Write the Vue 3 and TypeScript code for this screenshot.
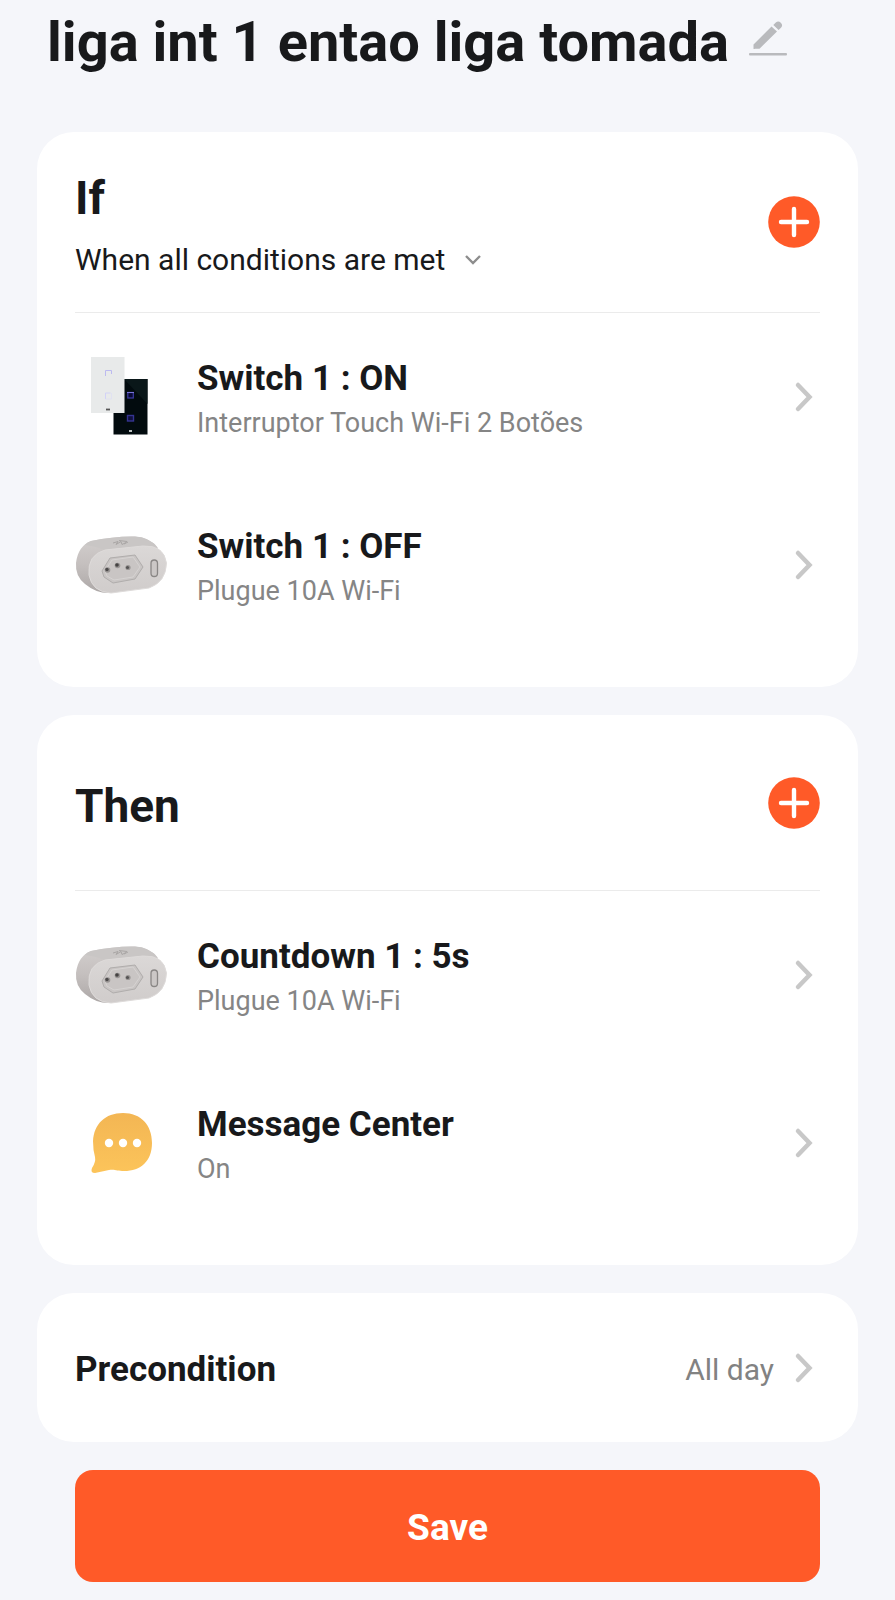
<script setup lang="ts">
import { ref } from 'vue'

type IconName = 'wall-switch' | 'plug' | 'message'

interface Entry {
  id: number
  icon: IconName
  title: string
  detail: string
}

const name = ref('liga int 1 entao liga tomada')
const matchMode = ref('all')

const conditions: Entry[] = [
  { id: 1, icon: 'wall-switch', title: 'Switch 1 : ON', detail: 'Interruptor Touch Wi-Fi 2 Botões' },
  { id: 2, icon: 'plug', title: 'Switch 1 : OFF', detail: 'Plugue 10A Wi-Fi' },
]

const actions: Entry[] = [
  { id: 3, icon: 'plug', title: 'Countdown 1 : 5s', detail: 'Plugue 10A Wi-Fi' },
  { id: 4, icon: 'message', title: 'Message Center', detail: 'On' },
]

const sections = [
  { key: 'if', heading: 'If', entries: conditions },
  { key: 'then', heading: 'Then', entries: actions },
]
</script>

<template>
  <main class="page">
    <header class="title-bar">
      <h1 class="title">{{ name }}</h1>
      <button class="edit" type="button" aria-label="Edit name">
        <svg width="38" height="38" viewBox="0 0 38 38" aria-hidden="true">
          <path d="M4.500 28.500V24.500L22.500 6.500l5.500 5L10.500 28.700H6Q4.500 29.500 4.500 28.500Z" fill="#b9babd" />
          <path d="M24.300 5l2.500-2.500q2.500-2.300 5 .2 2.500 2.300.2 5l-2.400 2.300Z" fill="#b9babd" />
          <rect x="0" y="33" width="38" height="2.500" rx="1" fill="#b9babd" />
        </svg>
      </button>
    </header>

    <section v-for="section in sections" :key="section.key" class="card">
      <div class="card-head" :class="section.key">
        <div class="card-label">
          <h2 class="heading">{{ section.heading }}</h2>
          <div v-if="section.key === 'if'" class="mode">
            <select v-model="matchMode" class="mode-select" aria-label="Condition matching">
              <option value="all">When all conditions are met</option>
              <option value="any">When any condition is met</option>
            </select>
            <svg width="18" height="12" viewBox="0 0 18 12" aria-hidden="true">
              <path d="M2 2l7 7 7-7" fill="none" stroke="#8d8d8d" stroke-width="2.400" />
            </svg>
          </div>
        </div>
        <button class="add" type="button" :aria-label="`Add to ${section.heading}`">
          <svg width="52" height="52" viewBox="0 0 52 52" aria-hidden="true">
            <circle cx="26" cy="26" r="25.800" fill="#ff5a28" />
            <path d="M26 13v26M13 26h26" stroke="#fff" stroke-width="4.400" stroke-linecap="round" />
          </svg>
        </button>
      </div>

      <ul class="entries">
        <li v-for="entry in section.entries" :key="entry.id">
          <button class="entry" type="button">
            <svg v-if="entry.icon === 'wall-switch'" class="icon" viewBox="0 0 92 92" aria-hidden="true">
              <rect x="38.500" y="28" width="34" height="55.500" fill="#020b0e" />
              <path d="M49 28h23.500v25Z" fill="#0a1719" />
              <rect x="16" y="6" width="33.500" height="56" fill="#e8eaea" />
              <path d="M30.500 25v-5.500h6V23" fill="none" stroke="#bcbaf0" />
              <path d="M30.500 48v-6h5" fill="none" stroke="#d2d2f7" />
              <path d="M36.500 42v6h-6" fill="none" stroke="#dedff2" stroke-width=".8" />
              <path d="M31 58.500h4" stroke="#555" stroke-width="1.800" />
              <rect x="52.800" y="41.500" width="5.500" height="5.500" fill="#080832" stroke="#3d3ba4" stroke-width="1.200" />
              <path d="M52 41.500h7" stroke="#7774d7" />
              <rect x="52.500" y="64.500" width="6" height="5.500" fill="#11113e" stroke="#353491" stroke-width="1.400" />
              <path d="M54 80h3" stroke="#e9eeee" stroke-width="1.600" />
            </svg>

            <svg v-else-if="entry.icon === 'plug'" class="icon" viewBox="0 0 92 92" aria-hidden="true">
              <defs>
                <linearGradient :id="`side-${entry.id}`" x1="0" y1="0" x2="0" y2="1">
                  <stop offset="0" stop-color="#d3cfce" />
                  <stop offset=".5" stop-color="#c4bfbe" />
                  <stop offset="1" stop-color="#aca7a6" />
                </linearGradient>
                <linearGradient :id="`face-${entry.id}`" x1="0" y1="0" x2="0" y2="1">
                  <stop offset="0" stop-color="#dbd8d7" />
                  <stop offset="1" stop-color="#d0cccb" />
                </linearGradient>
              </defs>
              <path d="M16 22Q40 17 60 17.500Q76 19 83 29L60 66L36 74Q22 75 10 65Q0 57 1 44Q3 27 16 22Z" :fill="`url(#side-${entry.id})`" />
              <path d="M16 22Q40 17 60 17.500Q74 18 82 28Q76 26 68 27L30 31Q20 27 10 26Q12 23 16 22Z" fill="#c9c6c5" />
              <path d="M30 31L68 27Q89 26 91.500 44Q91 63 74 69L36 74Q17 73 14 56Q12 36 30 31Z" :fill="`url(#face-${entry.id})`" stroke="#dedbda" />
              <path d="M27 52L35 39L60 36L68 48L60 60L38 64L29 58Z" fill="#c9c5c4" stroke="#b0adac" />
              <path d="M30 52L37 41L58 38L65 48L58 58L39 61L32 57Z" fill="none" stroke="#d6d3d2" />
              <circle cx="32.500" cy="51" r="2.800" fill="#999594" />
              <circle cx="42.500" cy="46.500" r="2.800" fill="#999594" />
              <circle cx="53" cy="48.500" r="2.600" fill="#999594" />
              <circle cx="32" cy="50.500" r="1.700" fill="#4c4a4a" />
              <circle cx="42" cy="46" r="1.800" fill="#444242" />
              <circle cx="52.500" cy="48.500" r="1.600" fill="#555353" />
              <rect x="76" y="41" width="6.500" height="16.500" rx="3.250" fill="#cbc7c6" stroke="#898685" stroke-width="1.300" />
              <path d="M38 24l5-1.500-2 3 5-3 1 3 4-2M44 21.500l8 1M49 25l4-2" fill="none" stroke="#a9a6a5" />
            </svg>

            <svg v-else class="icon" viewBox="0 0 92 92" aria-hidden="true">
              <defs>
                <linearGradient :id="`bubble-${entry.id}`" x1="0" y1="0" x2="0" y2="1">
                  <stop offset="0" stop-color="#f3b654" />
                  <stop offset="1" stop-color="#fcc45a" />
                </linearGradient>
              </defs>
              <path d="M48 16C66 16 77 28 77 46C77 64 66 74 49 74C42 74 40 72 34 73L20 76Q15 76 17 71Q21 65 20 60Q18 53 18 44C19 27 30 16 48 16Z" :fill="`url(#bubble-${entry.id})`" />
              <circle cx="34" cy="46" r="4.200" fill="#fff" />
              <circle cx="48" cy="46" r="4.200" fill="#fff" />
              <circle cx="62" cy="46" r="4.200" fill="#fff" />
            </svg>

            <span class="entry-text">
              <span class="entry-title">{{ entry.title }}</span>
              <span class="entry-detail">{{ entry.detail }}</span>
            </span>
            <svg class="chevron" width="20" height="32" viewBox="0 0 20 32" aria-hidden="true">
              <path d="M4 4L15.500 16L4 28" />
            </svg>
          </button>
        </li>
      </ul>
    </section>

    <section class="card">
      <button class="precondition" type="button">
        <span class="entry-title">Precondition</span>
        <span class="value">All day</span>
        <svg class="chevron" width="20" height="32" viewBox="0 0 20 32" aria-hidden="true">
          <path d="M4 4L15.500 16L4 28" />
        </svg>
      </button>
    </section>

    <button class="save" type="button">Save</button>
  </main>
</template>

<style>
body {
  margin: 0;
  background: #f5f6fa;
}
</style>

<style scoped>
.page {
  box-sizing: border-box;
  min-height: 100vh;
  padding: 10px 37px 18px;
  display: flex;
  flex-direction: column;
  gap: 28px;
  background: #f5f6fa;
  color: #18191b;
  font-family: Roboto, "Liberation Sans", sans-serif;
}

button,
select {
  margin: 0;
  padding: 0;
  border: 0;
  background: none;
  color: inherit;
  font-family: inherit;
  cursor: pointer;
}

svg {
  display: block;
  flex: none;
}

.title-bar {
  display: flex;
  align-items: flex-start;
  gap: 20px;
  padding: 0 10px 30px;
}

.title {
  margin: 0;
  font-size: 56px;
  line-height: 64px;
  font-weight: 700;
}

.edit {
  padding-top: 10px;
}

.card {
  padding: 0 38px;
  border-radius: 37px;
  background: #fff;
}

.card-head {
  display: flex;
  align-items: center;
  justify-content: space-between;
  border-bottom: 1px solid #ebebeb;
}

.card-head.if {
  min-height: 180px;
}

.card-head.then {
  min-height: 175px;
}

.card-label {
  padding-top: 6px;
}

.heading {
  margin: 0;
  font-size: 46px;
  line-height: 56px;
  font-weight: 700;
}

.mode {
  display: flex;
  align-items: center;
  gap: 18px;
  padding-top: 14px;
}

.mode-select {
  appearance: none;
  font-size: 30px;
  line-height: 40px;
}

.entries {
  margin: 0;
  padding: 0 0 38px;
  list-style: none;
}

.entry {
  width: 100%;
  min-height: 168px;
  display: flex;
  align-items: center;
  text-align: left;
}

.icon {
  width: 92px;
  height: 92px;
}

.entry-text {
  flex: 1;
  display: flex;
  flex-direction: column;
  gap: 4px;
  padding: 4px 0 0 30px;
}

.entry-title {
  font-size: 35px;
  line-height: 44px;
  font-weight: 700;
}

.entry-detail {
  color: #858585;
  font-size: 27px;
  line-height: 36px;
}

.chevron {
  margin-right: 6px;
}

.chevron path {
  fill: none;
  stroke: #c8c8c8;
  stroke-width: 4.500;
  stroke-linecap: round;
}

.precondition {
  width: 100%;
  min-height: 149px;
  display: flex;
  align-items: center;
}

.precondition .entry-title,
.precondition .value {
  padding-top: 4px;
}

.value {
  margin-left: auto;
  padding-right: 20px;
  color: #828282;
  font-size: 30px;
  line-height: 40px;
}

.save {
  min-height: 112px;
  margin: 0 38px;
  padding-top: 4px;
  border-radius: 18px;
  background: #ff5a28;
  color: #fff;
  font-size: 37px;
  line-height: 44px;
  font-weight: 700;
}
</style>
